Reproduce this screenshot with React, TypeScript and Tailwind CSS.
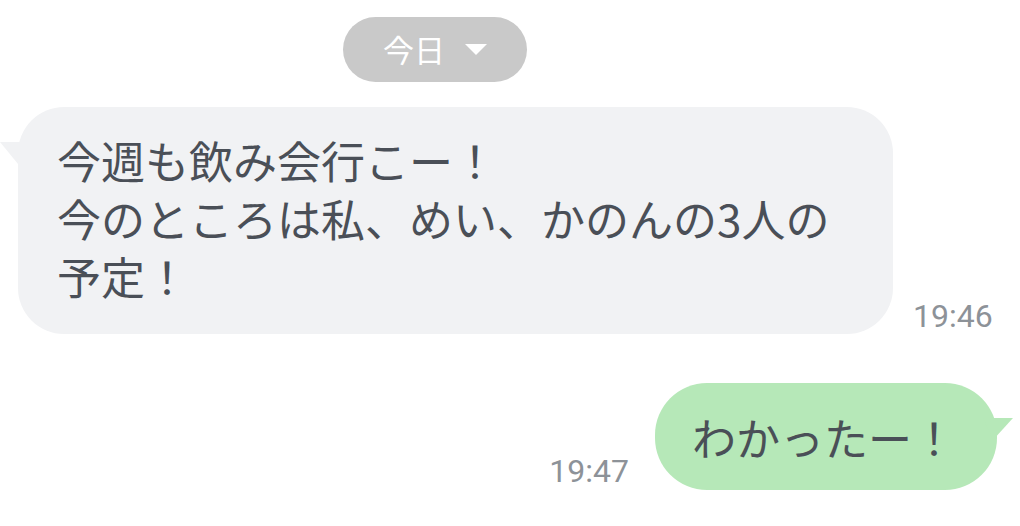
import React from 'react';

const jp = { fontFamily: '"Noto Sans CJK JP", "Noto Sans", sans-serif' };
const time = { fontFamily: 'Roboto, "Noto Sans", sans-serif' };

export default function App() {
  return (
    <div className="w-[1020px] h-[526px] bg-white overflow-hidden flex flex-col" style={jp}>
      {/* date pill */}
      <div className="mt-[17px] ml-[343px] w-[184px] h-[65px] rounded-full bg-[#c9c9c9] flex items-center justify-center gap-[20px] text-white text-[31px]">
        <span>今日</span>
        <svg width="22" height="11" viewBox="0 0 22 11">
          <path d="M0 0 L22 0 L11 11 Z" fill="#ffffff" />
        </svg>
      </div>

      {/* incoming */}
      <div className="mt-[25px] flex items-end">
        <div className="relative ml-[18px] w-[875px] rounded-[46px] bg-[#f1f2f4] pl-[39px] pt-[24px] pb-[29px] pr-[30px] text-[44px] leading-[58px] text-[#4a4f57]">
          <svg className="absolute left-[-18px] top-[35px]" width="30" height="22" viewBox="0 0 30 22">
            <path d="M0 0 L30 0 L18 22 Z" fill="#f1f2f4" />
          </svg>
          今週も飲み会行こー！
          <br />
          今のところは私、めい、かのんの3人の予定！
        </div>
        <span className="ml-[20px] mb-[-1px] text-[32px] leading-[38px] text-[#8d9298]" style={time}>
          19:46
        </span>
      </div>

      {/* outgoing */}
      <div className="mt-[49px] flex items-end justify-end pr-[23px]">
        <span className="mr-[26px] mb-[0px] text-[32px] leading-[38px] text-[#8d9298]" style={time}>
          19:47
        </span>
        <div className="relative h-[107px] rounded-[52px] bg-[#b6e8b8] pl-[37px] pr-[41px] flex items-center text-[44px] text-[#4a4f57]">
          わかったー！
          <svg className="absolute right-[-16px] top-[35px]" width="30" height="22" viewBox="0 0 30 22">
            <path d="M0 0 L30 0 L10 22 Z" fill="#b6e8b8" />
          </svg>
        </div>
      </div>
    </div>
  );
}
